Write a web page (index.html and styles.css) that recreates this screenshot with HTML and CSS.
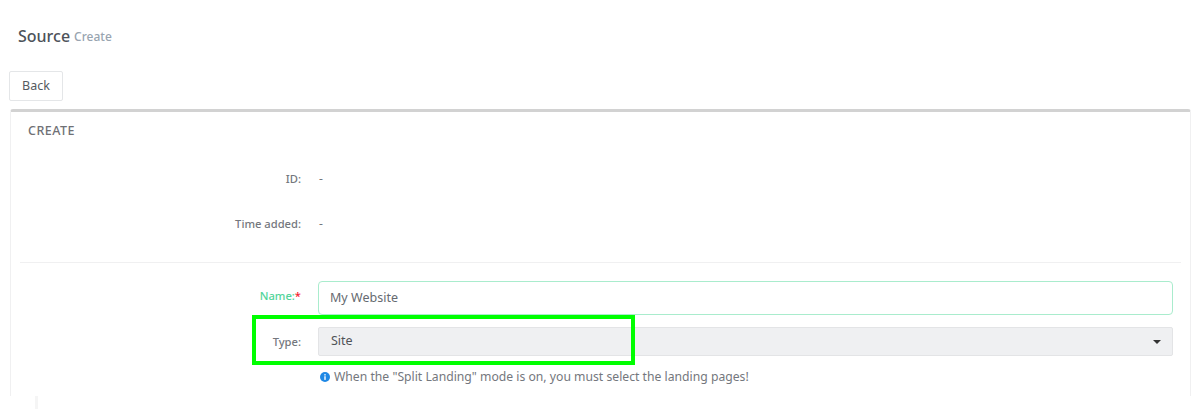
FILE: index.html
```html
<!DOCTYPE html>
<html lang="en">
<head>
<meta charset="utf-8">
<title>Source Create</title>
<link rel="stylesheet" href="styles.css">
</head>
<body>
<header class="page-title"><h1>Source</h1><small>Create</small></header>
<div class="actions"><button class="btn" type="button">Back</button></div>
<section class="panel">
  <h2 class="panel-title">CREATE</h2>
  <div class="static-rows">
    <div class="row"><span class="label">ID:</span><span class="value">-</span></div>
    <div class="row"><span class="label">Time added:</span><span class="value">-</span></div>
  </div>
  <hr class="divider">
  <div class="form-row name-row">
    <label class="label success">Name:<span class="req">*</span></label>
    <div class="control input"><span class="input-text">My Website</span></div>
  </div>
  <div class="form-row type-row">
    <label class="label">Type:</label>
    <div class="control select"><span class="select-text">Site</span><span class="caret"></span></div>
  </div>
  <p class="hint">
    <svg class="info" viewBox="0 0 16 16" width="10" height="10" aria-hidden="true"><circle cx="8" cy="8" r="8" fill="#1e88e5"/><rect x="6.9" y="6.8" width="2.2" height="5.8" fill="#fff"/><rect x="6.9" y="3.4" width="2.2" height="2.2" fill="#fff"/></svg>
    When the "Split Landing" mode is on, you must select the landing pages!
  </p>
</section>
<div class="stub"></div>
<div class="highlight"></div>
</body>
</html>
```
FILE: styles.css
```css
* { box-sizing: border-box; }
html, body { margin: 0; height: 409px; overflow: hidden; background: #fff; }
body { position: relative; font-family: "Noto Sans", "Open Sans", sans-serif; font-size: 12px; color: #6b6f82; }

.page-title { display: flex; align-items: baseline; gap: 4px; padding: 26px 0 0 18px; height: 71px; }
.page-title h1 { margin: 0; font-size: 16px; line-height: 20px; font-weight: 500; color: #4d5259; }
.page-title small { font-size: 12px; font-weight: 500; color: #98a4b0; position: relative; top: -1px; }

.actions { padding-left: 9px; height: 38px; }
.btn { width: 54px; height: 30px; padding: 0 0 2px; background: #fff; border: 1px solid #e4e6e8; border-radius: 2px; font: 400 12.5px "Noto Sans", sans-serif; color: #555a60; }

.panel { margin: 0 9px 0 10px; height: 287px; border: 1px solid #f0f0f1; border-top: 3px solid #d2d2d2; border-bottom: 0; border-radius: 3px 3px 0 0; padding: 0 9px; }
.panel-title { margin: 0; padding: 11px 0 0 8px; height: 44px; font-size: 12.5px; line-height: 16px; font-weight: 500; color: #6f7075; letter-spacing: .45px; }

.static-rows { height: 106px; }
.row { display: flex; align-items: center; height: 45px; }
.label { width: 281px; text-align: right; font-size: 11.2px; font-weight: 500; color: #74777d; flex: none; }
.value { margin-left: 18px; color: #74777d; }
.divider { margin: 0; border: 0; border-top: 1px solid #f0f0f1; }

.form-row { display: flex; align-items: center; }
.name-row { margin-top: 18px; height: 34px; }
.name-row .label { padding-bottom: 6px; }
.type-row { margin-top: 12px; height: 29px; }
.success { color: #52d49a; }
.req { color: #f5222d; }
.control { flex: 1; margin-left: 17px; margin-right: 8px; display: flex; align-items: center; border-radius: 3px; font-size: 12.5px; color: #666a70; }
.input { height: 34px; padding: 0 0 2px 11px; background: #fff; border: 1px solid #a9eccd; border-radius: 4px; }
.input-text { letter-spacing: .03px; }
.select { position: relative; height: 29px; padding: 0 0 2px 12px; background: #eff0f2; border: 1px solid #e3e4e6; border-radius: 2px; color: #4f5358; }
.caret { position: absolute; right: 11px; top: 12px; border-left: 4px solid transparent; border-right: 4px solid transparent; border-top: 4px solid #333; }

.hint { margin: 13px 0 0 300px; display: flex; align-items: center; gap: 4px; font-size: 12.2px; line-height: 16px; color: #74777d; }
.info { flex: none; }

.stub { position: absolute; left: 35px; top: 396px; width: 3px; height: 13px; background: #f5f5f5; }
.highlight { position: absolute; left: 252px; top: 315px; width: 383px; height: 50px; border: 4px solid #00ff00; }
```
